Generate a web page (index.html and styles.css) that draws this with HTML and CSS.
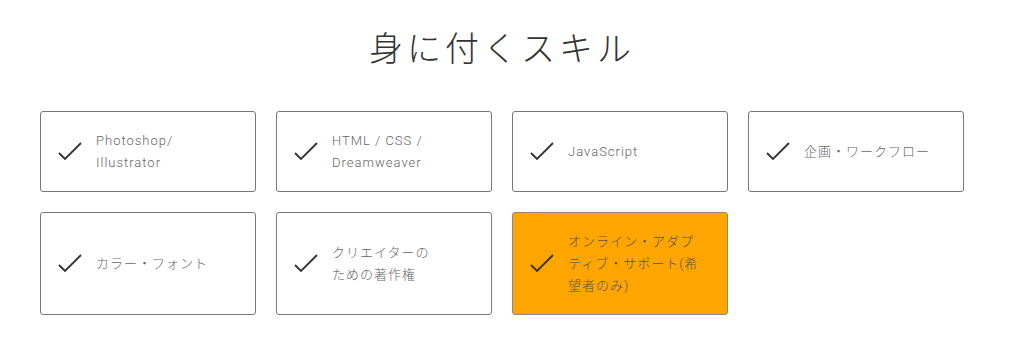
FILE: index.html
```html
<!DOCTYPE html>
<html lang="ja">
<head>
    <meta charset="UTF-8">
    <meta name="viewport" content="width=device-width, initial-scale=1.0">
    <title>身に付くスキル</title>
    <link rel="stylesheet" href="styles.css">
</head>
<body>
    <section class="skills">
        <h2 class="ttl">身に付くスキル</h2>

        <!-- Skill cards -->
        <ul class="sk-list">
            <li class="sk">
                <svg class="chk" viewBox="0 0 24 24"><path d="M1 13l6 6L23 3"/></svg>
                <p>Photoshop/<br>Illustrator</p>
            </li>
            <li class="sk">
                <svg class="chk" viewBox="0 0 24 24"><path d="M1 13l6 6L23 3"/></svg>
                <p>HTML / CSS /<br>Dreamweaver</p>
            </li>
            <li class="sk">
                <svg class="chk" viewBox="0 0 24 24"><path d="M1 13l6 6L23 3"/></svg>
                <p>JavaScript</p>
            </li>
            <li class="sk">
                <svg class="chk" viewBox="0 0 24 24"><path d="M1 13l6 6L23 3"/></svg>
                <p>企画・ワークフロー</p>
            </li>
            <li class="sk">
                <svg class="chk" viewBox="0 0 24 24"><path d="M1 13l6 6L23 3"/></svg>
                <p>カラー・フォント</p>
            </li>
            <li class="sk">
                <svg class="chk" viewBox="0 0 24 24"><path d="M1 13l6 6L23 3"/></svg>
                <p>クリエイターの<br>ための著作権</p>
            </li>
            <li class="sk sk-op">
                <svg class="chk" viewBox="0 0 24 24"><path d="M1 13l6 6L23 3"/></svg>
                <p>オンライン・アダプティブ・サポート(希望者のみ)</p>
            </li>
        </ul>
    </section>
</body>
</html>
```

FILE: styles.css
```css
body {
    margin: 0;
    padding: 0;
    background-color: #fff;
    font-family: Roboto, "Noto Sans CJK JP", sans-serif;
    color: #333;
}
.skills {
    padding: 30px 0 40px 40px;
}
.ttl {
    margin: 0 0 47px;
    width: 924px;
    text-align: center;
    font-family: "Noto Sans CJK JP", sans-serif;
    font-weight: 300;
    font-size: 34px;
    line-height: 34px;
    letter-spacing: 4px;
    color: #333;
}
.sk-list {
    list-style: none;
    margin: 0;
    padding: 0;
    display: grid;
    grid-template-columns: repeat(4, 216px);
    gap: 20px;
}
.sk {
    display: flex;
    align-items: center;
    gap: 14px;
    padding: 17.5px 22px 17.5px 17px;
    border: 1px solid #777;
    border-radius: 3px;
    background-color: #fff;
}
.sk-op {
    background-color: #ffa500;
    border-color: #888;
}
.chk {
    flex: none;
    width: 24px;
    height: 24px;
    fill: none;
    stroke: #333;
    stroke-width: 1.8;
}
.sk p {
    margin: 0;
    font-size: 13px;
    font-weight: 300;
    line-height: 22px;
    letter-spacing: 1px;
    color: #666;
}
.sk-op p {
    color: #555;
}
```
